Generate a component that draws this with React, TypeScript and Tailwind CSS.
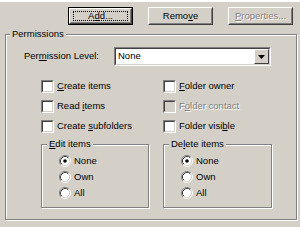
import React from "react";

const face = "bg-[#d4d0c8]";

function Btn({ children, isDefault, disabled }: { children: React.ReactNode; isDefault?: boolean; disabled?: boolean }) {
  const inner = (
    <div className="flex h-full w-full border border-t-white border-l-white border-r-[#404040] border-b-[#404040]">
      <div className="flex h-full w-full items-center justify-center border border-t-[#d4d0c8] border-l-[#d4d0c8] border-r-[#808080] border-b-[#808080]">
        {isDefault ? (
          <div className="flex h-[calc(100%-2px)] w-[calc(100%-4px)] items-center justify-center border border-dotted border-black">
            {children}
          </div>
        ) : (
          <span className={disabled ? "text-[#808080] [text-shadow:1px_1px_0_#fff]" : ""}>{children}</span>
        )}
      </div>
    </div>
  );
  return (
    <div className={`h-[18px] w-[65px] ${isDefault ? "border border-black" : ""}`}>{inner}</div>
  );
}

function Check({ label, disabled }: { label: React.ReactNode; disabled?: boolean }) {
  return (
    <div className="flex h-[20px] items-center">
      <div className="h-[13px] w-[13px] border border-t-[#808080] border-l-[#808080] border-r-white border-b-white">
        <div
          className={`h-full w-full border border-t-[#404040] border-l-[#404040] border-r-[#d4d0c8] border-b-[#d4d0c8] ${
            disabled ? "bg-[#d4d0c8]" : "bg-white"
          }`}
        />
      </div>
      <span className={`ml-[3px] ${disabled ? "text-[#808080] [text-shadow:1px_1px_0_#fff]" : ""}`}>{label}</span>
    </div>
  );
}

function Radio({ label, checked }: { label: string; checked?: boolean }) {
  return (
    <div className="flex h-[16px] items-center">
      <svg width="12" height="12" viewBox="0 0 12 12">
        <circle cx="6" cy="6" r="4.5" fill="#fff" />
        <path d="M2.11 9.89 A5.5 5.5 0 0 1 9.89 2.11" fill="none" stroke="#808080" strokeWidth="1" />
        <path d="M9.89 2.11 A5.5 5.5 0 0 1 2.11 9.89" fill="none" stroke="#fff" strokeWidth="1" />
        <path d="M2.82 9.18 A4.5 4.5 0 0 1 9.18 2.82" fill="none" stroke="#404040" strokeWidth="1" />
        <path d="M9.18 2.82 A4.5 4.5 0 0 1 2.82 9.18" fill="none" stroke="#d4d0c8" strokeWidth="1" />
        {checked && <circle cx="6" cy="6" r="1.8" fill="#000" />}
      </svg>
      <span className="ml-[3px]">{label}</span>
    </div>
  );
}

function SubGroup({ title, className }: { title: React.ReactNode; className: string }) {
  return (
    <fieldset
      className={`h-[70px] border border-[#808080] shadow-[1px_1px_0_#fff,inset_1px_1px_0_#fff] ${className}`}
    >
      <legend className={`ml-[5px] px-[2px] leading-[12px] ${face}`}>{title}</legend>
      <div className="mt-[3px] pl-[17px]">
        <Radio label="None" checked />
        <Radio label="Own" />
        <Radio label="All" />
      </div>
    </fieldset>
  );
}

export default function App() {
  return (
    <div className={`h-[227px] w-[300px] overflow-hidden ${face} font-['Liberation_Sans',Arial,sans-serif] text-[9.5px] text-black`}>
      <div className="h-[2px] bg-white" />

      {/* buttons */}
      <div className="mt-[5px] flex justify-end gap-[15px] pr-[7px]">
        <Btn isDefault>
          A<u>d</u>d...
        </Btn>
        <Btn>
          Remo<u>v</u>e
        </Btn>
        <Btn disabled>
          <u>P</u>roperties...
        </Btn>
      </div>

      {/* permissions */}
      <fieldset className="mx-[5px] mt-[3px] h-[192px] w-[292px] border border-[#808080] shadow-[1px_1px_0_#fff,inset_1px_1px_0_#fff]">
        <legend className={`ml-[4px] px-[2px] leading-[12px] ${face}`}>Permissions</legend>

        <div className="mt-[7px] flex items-center pl-[18px]">
          <span className="w-[90px]">
            Per<u>m</u>ission Level:
          </span>
          <div className="flex h-[19px] w-[157px] border border-t-[#808080] border-l-[#808080] border-r-white border-b-white">
            <div className="flex h-full w-full items-center border border-t-[#404040] border-l-[#404040] border-r-[#d4d0c8] border-b-[#d4d0c8] bg-white">
              <span className="ml-[2px] flex-1">None</span>
              <div className="flex h-full w-[15px] items-center justify-center border border-t-white border-l-white border-r-[#404040] border-b-[#404040] bg-[#d4d0c8]">
                <svg width="7" height="4" viewBox="0 0 7 4">
                  <path d="M0 0H7L3.5 4Z" fill="#000" />
                </svg>
              </div>
            </div>
          </div>
        </div>

        <div className="mt-[10px] grid grid-cols-[122px_1fr] pl-[35px]">
          <Check label={<><u>C</u>reate items</>} />
          <Check label={<><u>F</u>older owner</>} />
          <Check label={<>Read <u>i</u>tems</>} />
          <Check label={<>F<u>o</u>lder contact</>} disabled />
          <Check label={<>Create <u>s</u>ubfolders</>} />
          <Check label={<>Folder visi<u>b</u>le</>} />
        </div>

        <div className="mt-[2px] flex pl-[35px]">
          <SubGroup title={<><u>E</u>dit items</>} className="w-[108px]" />
          <SubGroup title={<>De<u>l</u>ete items</>} className="ml-[14px] w-[109px]" />
        </div>
      </fieldset>
    </div>
  );
}
